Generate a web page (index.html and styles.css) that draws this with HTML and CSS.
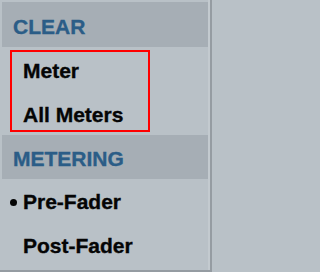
FILE: index.html
```html
<!DOCTYPE html>
<html>
<head>
<meta charset="utf-8">
<link rel="stylesheet" href="styles.css">
</head>
<body>
<div class="menu">
  <div class="header header-first">CLEAR</div>
  <div class="group">
    <div class="item item-first">Meter</div>
    <div class="item item-last">All Meters</div>
  </div>
  <div class="header header-second">METERING</div>
  <div class="item item-radio"><span class="mark"><span class="dot"></span></span>Pre-Fader</div>
  <div class="item item-radio"><span class="mark"></span>Post-Fader</div>
</div>
</body>
</html>
```
FILE: styles.css
```css
html, body {
  margin: 0;
  padding: 0;
}
body {
  width: 212px;
  height: 272px;
  background: #b9c1c7;
  font-family: "Liberation Sans", Arial, sans-serif;
  font-weight: bold;
  font-size: 21px;
  line-height: 24px;
  color: #050505;
  -webkit-text-stroke: 0.35px currentColor;
}
.menu {
  width: 212px;
  height: 272px;
  box-sizing: border-box;
  padding: 2px 2px 0 2px;
  background: #b9c1c7;
  border-right: 2px solid #959ca2;
  border-bottom: 2px solid #959ca2;
  box-shadow: inset -2px 0 0 #c3cacf;
}
.header {
  background: #a6aeb5;
  color: #2b5d87;
  padding-left: 11px;
  box-sizing: border-box;
}
.header-first {
  height: 45px;
  padding-top: 13px;
}
.header-second {
  height: 44px;
  padding-top: 12px;
  margin-top: 3px;
}
.group {
  margin: 3px 0 0 8px;
  width: 140px;
  box-sizing: border-box;
  border: 2px solid #ff0000;
}
.item {
  box-sizing: border-box;
  padding-left: 11px;
  white-space: nowrap;
}
.item-first {
  height: 44px;
  padding-top: 7px;
}
.item-last {
  height: 34px;
  padding-top: 7px;
}
.item-radio {
  height: 44px;
  padding-top: 11px;
  padding-left: 6px;
}
.mark {
  display: inline-block;
  width: 15px;
  height: 7px;
  vertical-align: 3px;
}
.dot {
  display: block;
  width: 7px;
  height: 7px;
  margin-left: 2px;
  border-radius: 50%;
  background: #050505;
}
```
